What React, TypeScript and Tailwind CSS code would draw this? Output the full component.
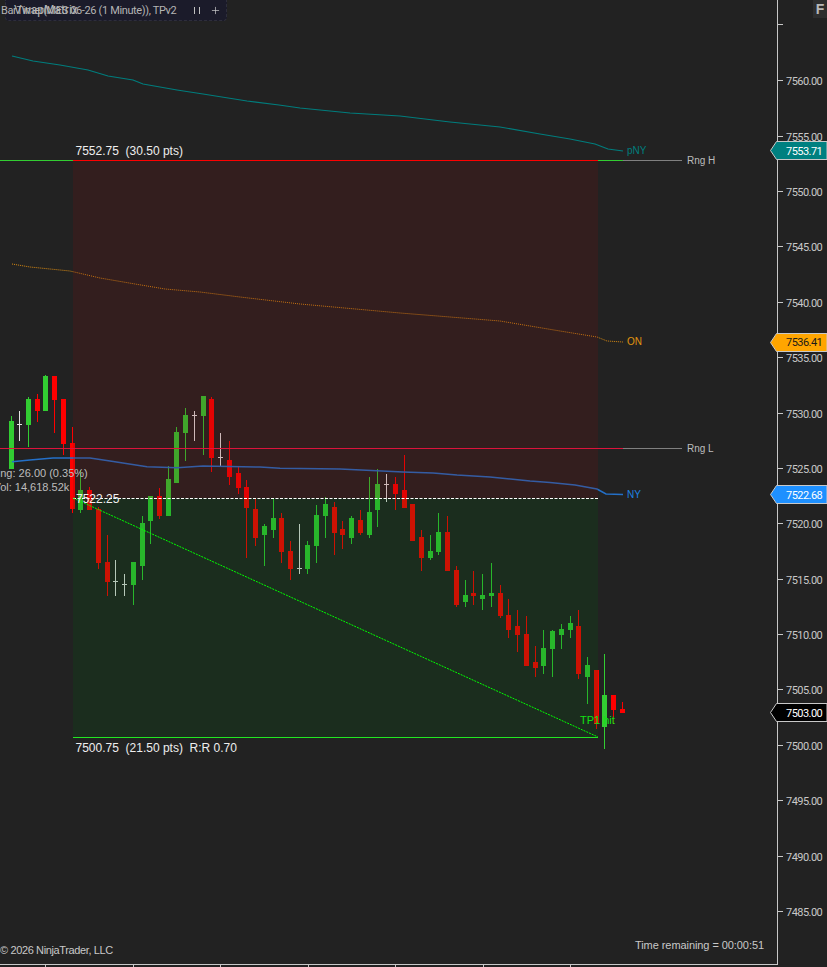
import { Plus } from "lucide-react";

type Candle = [number, number, number, number, number, "g" | "r" | "d"];

// x, wick top, wick bottom, body top, body bottom, kind (pixels)
const CANDLES: Candle[] = [
  [11.5, 416, 469, 421, 469, "g"],
  [19.5, 411, 441, 424, 425, "d"],
  [28.5, 397, 447, 399, 425, "g"],
  [37.5, 394, 422, 399, 411, "r"],
  [45.5, 375, 411, 376, 411, "g"],
  [54.5, 376, 433, 376, 400, "r"],
  [63.5, 399, 455, 399, 444, "r"],
  [72.5, 427, 513, 443, 509, "r"],
  [80.5, 470, 513, 490, 510, "g"],
  [89.5, 487, 510, 490, 510, "r"],
  [98.5, 507, 569, 509, 563, "r"],
  [107.5, 535, 596, 562, 582, "r"],
  [115.5, 560, 596, 581, 582, "d"],
  [124.5, 574, 596, 584, 585, "d"],
  [133.5, 562, 605, 562, 585, "g"],
  [142.5, 516, 580, 523, 566, "g"],
  [150.5, 496, 544, 496, 521, "g"],
  [159.5, 488, 519, 496, 516, "r"],
  [168.5, 466, 516, 479, 516, "g"],
  [176.5, 427, 483, 432, 483, "g"],
  [185.5, 408, 461, 415, 433, "g"],
  [194.5, 411, 441, 415, 416, "d"],
  [203.5, 396, 455, 396, 416, "g"],
  [211.5, 397, 472, 399, 458, "r"],
  [220.5, 433, 466, 457, 458, "d"],
  [229.5, 441, 485, 460, 477, "r"],
  [238.5, 466, 494, 473, 488, "r"],
  [246.5, 480, 558, 487, 508, "r"],
  [255.5, 499, 546, 509, 538, "r"],
  [264.5, 524, 566, 526, 535, "g"],
  [273.5, 499, 538, 518, 530, "g"],
  [281.5, 513, 563, 518, 552, "r"],
  [290.5, 541, 580, 551, 569, "r"],
  [299.5, 524, 574, 568, 569, "d"],
  [307.5, 541, 574, 545, 569, "g"],
  [316.5, 505, 563, 515, 546, "g"],
  [325.5, 497, 538, 504, 516, "g"],
  [334.5, 502, 555, 507, 533, "r"],
  [342.5, 521, 549, 529, 535, "r"],
  [351.5, 516, 544, 518, 538, "g"],
  [360.5, 510, 535, 520, 533, "r"],
  [369.5, 477, 538, 512, 535, "g"],
  [377.5, 469, 527, 484, 510, "g"],
  [386.5, 474, 502, 484, 485, "d"],
  [395.5, 477, 510, 484, 494, "r"],
  [404.5, 455, 508, 490, 508, "r"],
  [412.5, 504, 541, 504, 541, "r"],
  [421.5, 530, 571, 537, 558, "r"],
  [430.5, 535, 560, 551, 558, "g"],
  [438.5, 513, 555, 532, 552, "g"],
  [447.5, 516, 571, 532, 571, "r"],
  [456.5, 566, 607, 570, 605, "r"],
  [465.5, 580, 607, 595, 602, "g"],
  [473.5, 571, 605, 593, 596, "r"],
  [482.5, 574, 610, 595, 599, "g"],
  [491.5, 563, 607, 593, 596, "g"],
  [500.5, 585, 618, 593, 616, "r"],
  [508.5, 599, 638, 615, 630, "r"],
  [517.5, 610, 652, 626, 635, "r"],
  [526.5, 616, 666, 634, 666, "r"],
  [535.5, 646, 677, 662, 668, "r"],
  [543.5, 630, 674, 648, 666, "g"],
  [552.5, 630, 677, 631, 649, "g"],
  [561.5, 624, 649, 629, 635, "g"],
  [570.5, 616, 638, 623, 630, "g"],
  [578.5, 610, 679, 626, 674, "r"],
  [587.5, 657, 704, 665, 677, "g"],
  [596.5, 670, 729, 670, 724, "r"],
  [604.5, 654, 749, 695, 727, "g"],
  [613.5, 695, 724, 695, 710, "r"],
  [622.5, 702, 713, 709, 713, "r"],
];

const COLORS = { g: "#32cd32", r: "#ff0000", d: "#e4e4e4" };

const TEAL =
  "12,56 33,61 60,65 88,70 108,76 133,80 143,84 177,90 203,94 247,101 279,105 300,108 350,113 400,116 450,122 500,127 540,134 570,139 595,144 608,149 623,151";
const ORANGE =
  "12,264 30,267 70,271 100,278 135,284 165,289 200,292 240,297 300,304 400,313 500,321 560,331 597,337 607,341 623,342";
const BLUE =
  "12,461.7 30,460 53,458 90,458 110,461 147,466.7 177,467.7 203,466 260,467 280,468.3 340,469 403,472 433,473 457,475 490,477 530,481 550,482.5 575,485 597,489 606,494 623,494.5";

const AXIS = [7560, 7555, 7550, 7545, 7540, 7535, 7530, 7525, 7520, 7515, 7510, 7505, 7500, 7495, 7490, 7485];
const TIME_TICKS = [0, 1, 2, 3, 4, 5, 6];
const TAGS = [
  { price: 7553.71, fill: "#008080", text: "text-white" },
  { price: 7536.41, fill: "#ffa500", text: "text-[#1a1a1a]" },
  { price: 7522.68, fill: "#1e90ff", text: "text-white" },
  { price: 7503.0, fill: "#000000", text: "text-white" },
];

const priceY = (p: number) => 80.5 + (7560 - p) * 11.08;

function Chart() {
  return (
    <svg width="777" height="964" className="absolute left-0 top-0">
      <g shapeRendering="crispEdges">
        {CANDLES.map(([x, hi, lo, top, bottom, kind], i) => (
          <g key={i} fill={COLORS[kind]}>
            <rect x={x - 0.5} y={hi} width="1" height={lo - hi} />
            <rect x={x - 2.5} y={top} width="5" height={bottom - top} />
          </g>
        ))}
      </g>
      <polyline points={TEAL} fill="none" stroke="#007d7d" strokeWidth="1.2" />
      <polyline points={ORANGE} fill="none" stroke="#d98a12" strokeWidth="1" strokeDasharray="1 1" />
      <polyline points={BLUE} fill="none" stroke="#2470c8" strokeWidth="1.5" />
      <g shapeRendering="crispEdges">
        <rect x="73" y="160" width="525" height="338" fill="#770e0e" fillOpacity="0.2" />
        <rect x="73" y="498" width="525" height="239" fill="#00590e" fillOpacity="0.2" />
        <rect x="0" y="160" width="73" height="1" fill="#32cd32" />
        <rect x="73" y="160" width="525" height="1" fill="#ff0000" />
        <rect x="598" y="160" width="25" height="1" fill="#32cd32" />
        <rect x="623" y="160" width="59" height="1" fill="#808080" />
        <rect x="0" y="448" width="623" height="1" fill="#dc143c" />
        <rect x="623" y="448" width="59" height="1" fill="#808080" />
        <rect x="73" y="737" width="525" height="1" fill="#22e622" />
      </g>
      <line x1="73" y1="498.5" x2="598" y2="498.5" stroke="#ffffff" strokeDasharray="3 1.5" />
      <line x1="73" y1="498" x2="598" y2="737" stroke="#00ff00" strokeWidth="1" strokeDasharray="2 1" />
    </svg>
  );
}

function Label({ x, y, className, children }: { x: number; y: number; className: string; children: React.ReactNode }) {
  return (
    <span className={`absolute -translate-y-1/2 whitespace-pre leading-none ${className}`} style={{ left: x, top: y }}>
      {children}
    </span>
  );
}

function PriceAxis() {
  return (
    <aside className="relative flex-1 font-['Roboto',sans-serif] text-[11px] tracking-[-0.55px] text-[#c8c8c8]">
      <div className="mt-[24px] h-px w-[5px] bg-[#c8c8c8]" />
      <div className="mt-[28px] flex flex-col">
        {AXIS.map((p) => (
          <div key={p} className="flex h-[55.4px] items-center gap-[3px]">
            <div className="h-px w-[5px] bg-[#c8c8c8]" />
            <span className="translate-y-px leading-none">{p.toFixed(2)}</span>
          </div>
        ))}
      </div>
      {TAGS.map((t) => {
        const cy = priceY(t.price);
        return (
          <div key={t.price}>
            <svg width="57" height="19" className="absolute left-[-8px]" style={{ top: Math.round(cy - 9) }}>
              <polygon points="0.5,9.5 6.5,0.5 57,0.5 57,18.5 6.5,18.5" fill={t.fill} stroke="#c8c8c8" />
            </svg>
            <Label x={8} y={cy + 0.5} className={t.text}>
              {t.price.toFixed(2)}
            </Label>
          </div>
        );
      })}
      <div className="absolute right-0 top-0 flex h-[18px] w-[14px] items-center justify-center bg-[#2e2e2e] font-['Liberation_Sans',sans-serif] text-[14px] font-bold tracking-normal text-[#b8b8b8]">
        F
      </div>
    </aside>
  );
}

function Toolbar() {
  return (
    <div className="relative ml-[5px] flex h-[21px] w-[222px] items-center rounded-b border border-t-0 border-dashed border-[#2e2e3c] bg-[#1b1b2a] font-['Roboto',sans-serif] text-[#b4b4b4]">
      <span className="ml-[-5px] w-[193px] whitespace-pre text-[11px] leading-none tracking-[-0.36px]">
        BarTimer(MES 06-26 (1 Minute)), TPv2
      </span>
      <Label x={8} y={10} className="text-[12px]">
        VwapMatrix
      </Label>
      <div className="flex gap-[4px]">
        <span className="h-[7px] w-px bg-[#c0c0c0]" />
        <span className="h-[7px] w-px bg-[#c0c0c0]" />
      </div>
      <Plus size={11} strokeWidth={1.5} className="ml-[10px] text-[#d0d0d0]" />
    </div>
  );
}

export default function App() {
  return (
    <div className="relative h-[967px] w-[827px] overflow-hidden bg-[#222222] font-['Liberation_Sans',sans-serif]">
      <div className="flex h-[965px]">
        <main className="relative flex w-[778px] flex-col border-b border-r border-[#c8c8c8]">
          <Chart />
          <Toolbar />

          <Label x={75.5} y={151} className="text-[12px] text-[#eeeeee]">{"7552.75  (30.50 pts)"}</Label>
          <Label x={76} y={498.5} className="text-[12px] text-[#f0f0f0]">7522.25</Label>
          <Label x={75.5} y={747.5} className="text-[12px] text-[#eeeeee]">{"7500.75  (21.50 pts)  R:R 0.70"}</Label>
          <Label x={-7.7} y={473} className="text-[11px] text-[#bdbdbd]">Rng: 26.00 (0.35%)</Label>
          <Label x={-6.6} y={487} className="text-[11px] text-[#bdbdbd]">Vol: 14,618.52k</Label>
          <Label x={580} y={719.5} className="text-[11px] text-[#12e012]">TP1 hit</Label>

          <Label x={627} y={151} className="text-[10px] text-[#007d7d]">pNY</Label>
          <Label x={627} y={341.5} className="text-[10px] text-[#e0940f]">ON</Label>
          <Label x={627} y={494.5} className="text-[10px] text-[#1e82e0]">NY</Label>
          <Label x={687} y={160.5} className="text-[10px] text-[#bdbdbd]">Rng H</Label>
          <Label x={687} y={449} className="text-[10px] text-[#bdbdbd]">Rng L</Label>

          <footer className="relative mt-auto flex items-start justify-between pb-[8px] pr-[13px] text-[#c8c8c8]">
            <span className="mt-[5px] text-[11px] leading-none tracking-[-0.37px]">© 2026 NinjaTrader, LLC</span>
            <span className="text-[11px] leading-none tracking-[-0.07px]">Time remaining = 00:00:51</span>
          </footer>
        </main>
        <PriceAxis />
      </div>
      <div className="flex h-[2px] gap-[86.5px] pl-[45px]">
        {TIME_TICKS.map((t) => (
          <div key={t} className="h-full w-px bg-[#c8c8c8]" />
        ))}
      </div>
    </div>
  );
}
